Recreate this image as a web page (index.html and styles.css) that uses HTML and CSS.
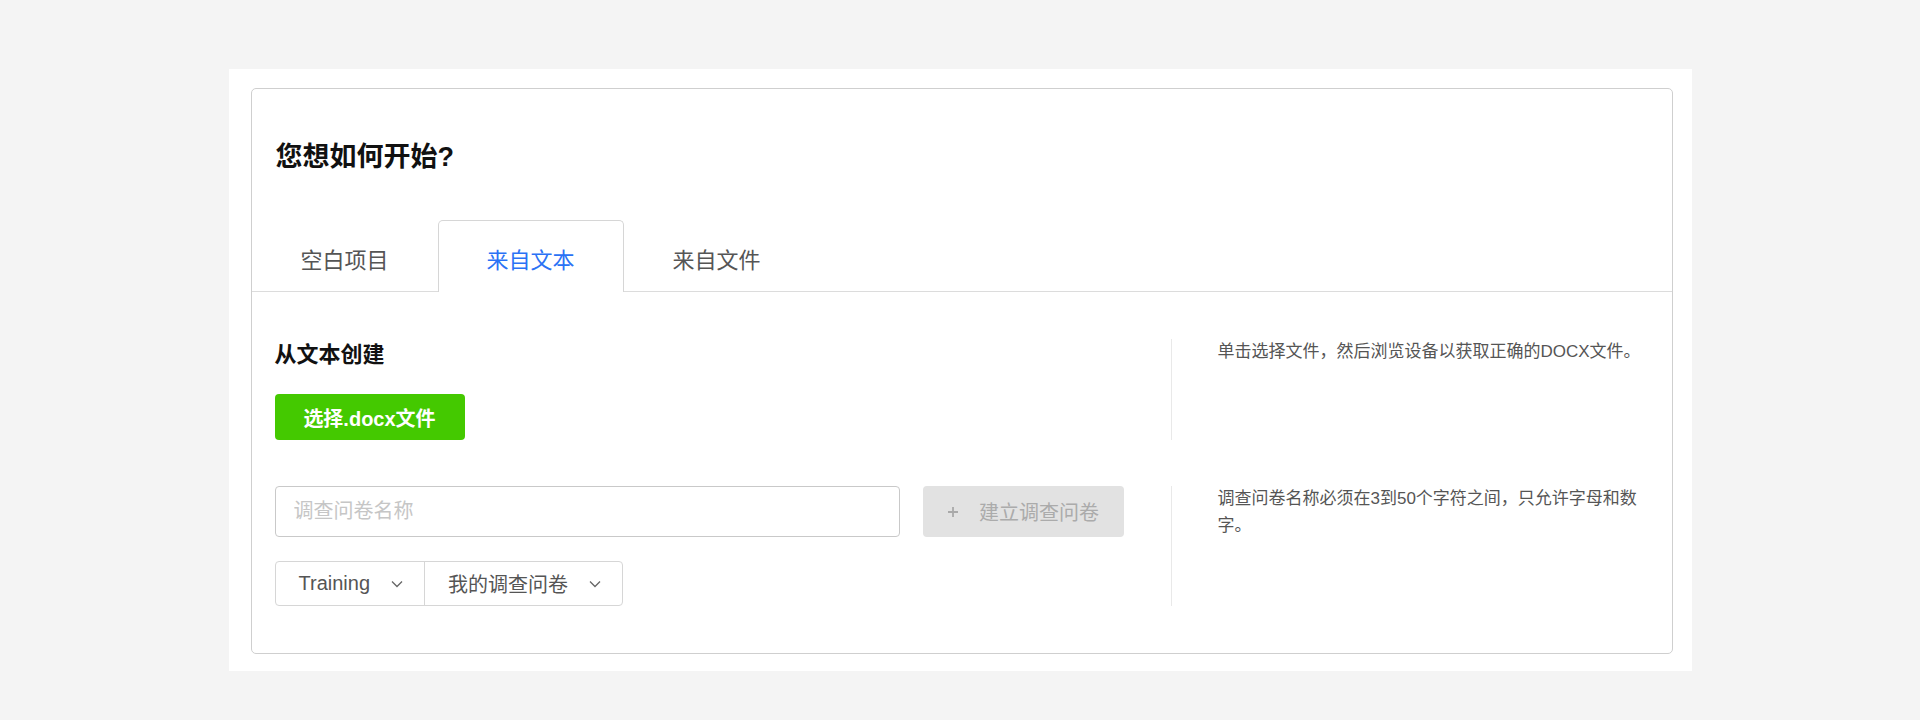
FILE: index.html
```html
<!DOCTYPE html>
<html lang="zh-CN">
<head>
  <meta charset="UTF-8">
  <meta name="viewport" content="width=device-width, initial-scale=1.0">
  <title>您想如何开始?</title>
  <link rel="stylesheet" href="styles.css">
</head>
<body>
  <div class="panel">
    <div class="card">
      <h1 class="title">您想如何开始?</h1>

      <div class="tabs">
        <div class="tab">空白项目</div>
        <div class="tab active">来自文本</div>
        <div class="tab">来自文件</div>
      </div>

      <div class="tab-body">
        <div class="row">
          <div class="row-main">
            <div class="section-title">从文本创建</div>
            <button class="btn-green">选择.docx文件</button>
          </div>
          <div class="divider"></div>
          <div class="help">单击选择文件，然后浏览设备以获取正确的DOCX文件。</div>
        </div>

        <div class="row row-second">
          <div class="row-main">
            <div class="input-line">
              <input class="name-input" type="text" placeholder="调查问卷名称">
              <button class="btn-disabled" disabled>
                <svg class="plus" width="12" height="12" viewBox="0 0 12 12">
                  <path d="M6 1v10M1 6h10" stroke="#a9a9a9" stroke-width="1.8" fill="none"/>
                </svg>
                建立调查问卷
              </button>
            </div>
            <div class="select-group">
              <div class="select">
                <span>Training</span>
                <svg class="chevron" width="12" height="8" viewBox="0 0 12 8">
                  <path d="M1 1.5l5 5 5-5" stroke="#666" stroke-width="1.3" fill="none"/>
                </svg>
              </div>
              <div class="select">
                <span>我的调查问卷</span>
                <svg class="chevron" width="12" height="8" viewBox="0 0 12 8">
                  <path d="M1 1.5l5 5 5-5" stroke="#666" stroke-width="1.3" fill="none"/>
                </svg>
              </div>
            </div>
          </div>
          <div class="divider"></div>
          <div class="help">调查问卷名称必须在3到50个字符之间，只允许字母和数字。</div>
        </div>
      </div>
    </div>
  </div>
</body>
</html>
```

FILE: styles.css
```css
body {
  margin: 0;
  background-color: #f4f4f4;
  font-family: "Liberation Sans", "Noto Sans CJK SC", sans-serif;
  color: #333;
}

.panel {
  width: 1463px;
  box-sizing: border-box;
  margin: 69px auto 0 auto;
  padding: 19px 19px 17px 22px;
  background-color: white;
}

.card {
  border: 1px solid #cfcfcf;
  border-radius: 5px;
}

.title {
  margin: 0;
  padding: 48px 24px 0 24px;
  font-size: 27px;
  line-height: 40px;
  font-weight: bold;
  color: #111;
}

.tabs {
  display: flex;
  margin-top: 43px;
  border-bottom: 1px solid #dcdcdc;
}

.tab {
  width: 186px;
  box-sizing: border-box;
  padding: 25px 0 15px 0;
  text-align: center;
  font-size: 22px;
  line-height: 30px;
  color: #555;
  border: 1px solid transparent;
  border-bottom: none;
  border-radius: 5px 5px 0 0;
  cursor: pointer;
}

.tab.active {
  color: #2a72f5;
  border-color: #d6d6d6;
  background-color: white;
  margin-bottom: -1px;
  padding-bottom: 16px;
}

.tab-body {
  padding: 47px 24px 47px 23px;
}

.row {
  display: flex;
  align-items: stretch;
}

.row-second {
  margin-top: 46px;
}

.row-main {
  width: 849px;
  flex-shrink: 0;
}

.divider {
  width: 1px;
  background-color: #e9e9e9;
  margin: 0 46px 0 47px;
}

.help {
  flex: 1;
  font-size: 17px;
  line-height: 27px;
  color: #555;
  margin-top: -1px;
}

.section-title {
  font-size: 22px;
  line-height: 32px;
  font-weight: bold;
  color: #111;
}

.btn-green {
  display: block;
  margin-top: 23px;
  width: 190px;
  height: 46px;
  border: none;
  border-radius: 4px;
  background-color: #44c900;
  color: white;
  font-family: inherit;
  font-size: 20px;
  font-weight: bold;
  cursor: pointer;
}

.input-line {
  display: flex;
  gap: 23px;
}

.name-input {
  flex: 1;
  height: 51px;
  box-sizing: border-box;
  border: 1px solid #c9c9c9;
  border-radius: 4px;
  padding: 0 18px;
  font-family: inherit;
  font-size: 20px;
  color: #333;
}

.name-input::placeholder {
  color: #c6c6c6;
}

.btn-disabled {
  width: 201px;
  height: 51px;
  display: flex;
  align-items: center;
  justify-content: center;
  border: none;
  border-radius: 4px;
  background-color: #e2e2e2;
  color: #ababab;
  font-family: inherit;
  font-size: 20px;
}

.plus {
  margin-right: 20px;
}

.select-group {
  display: inline-flex;
  margin-top: 24px;
  border: 1px solid #d6d6d6;
  border-radius: 4px;
  height: 45px;
  box-sizing: border-box;
}

.select {
  display: flex;
  align-items: center;
  padding: 0 21px 0 23px;
  font-size: 20px;
  color: #555;
  cursor: pointer;
}

.select + .select {
  border-left: 1px solid #d6d6d6;
}

.chevron {
  margin-left: 21px;
}
```
